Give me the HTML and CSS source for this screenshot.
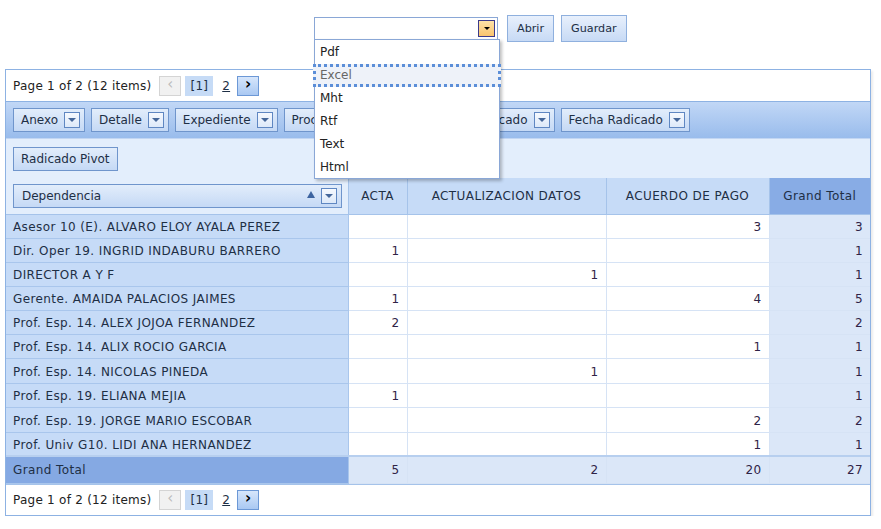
FILE: index.html
```html
<!DOCTYPE html>
<html>
<head>
<meta charset="utf-8">
<link rel="stylesheet" href="styles.css">
</head>
<body>
<div class="toolbar">
  <div class="combo">
    <div class="combo-input"></div>
    <div class="combo-btn"><span class="tri-black"></span></div>
    <ul class="combo-list">
      <li>Pdf</li>
      <li class="focused">Excel</li>
      <li>Mht</li>
      <li>Rtf</li>
      <li>Text</li>
      <li class="last">Html</li>
    </ul>
  </div>
  <button class="btn">Abrir</button>
  <button class="btn">Guardar</button>
</div>

<div class="pivot">
  <div class="pager">
    <span class="pager-text">Page 1 of 2 (12 items)</span>
    <span class="pbtn disabled">&lsaquo;</span>
    <span class="pcur">[1]</span>
    <span class="plink">2</span>
    <span class="pbtn next">&rsaquo;</span>
  </div>
  <div class="filter-area">
    <span class="field">Anexo<span class="dd"><span class="tri"></span></span></span>
    <span class="field">Detalle<span class="dd"><span class="tri"></span></span></span>
    <span class="field">Expediente<span class="dd"><span class="tri"></span></span></span>
    <span class="field w-proc">Proceso<span class="dd"><span class="tri"></span></span></span>
    <span class="field w-usr">Usuario Radicado<span class="dd"><span class="tri"></span></span></span>
    <span class="field">Fecha Radicado<span class="dd"><span class="tri"></span></span></span>
  </div>
  <div class="column-area">
    <span class="field plain">Radicado Pivot</span>
  </div>
  <table class="grid">
    <colgroup>
      <col class="c0"><col class="c1"><col class="c2"><col class="c3"><col class="c4">
    </colgroup>
    <thead>
      <tr>
        <th class="rowfield-cell"><span class="field wide"><span class="ftext">Dependencia</span><span class="sort"></span><span class="dd"><span class="tri"></span></span></span></th>
        <th>ACTA</th>
        <th>ACTUALIZACION DATOS</th>
        <th>ACUERDO DE PAGO</th>
        <th class="gt-head">Grand Total</th>
      </tr>
    </thead>
    <tbody>
      <tr><td class="rh">Asesor 10 (E). ALVARO ELOY AYALA PEREZ</td><td></td><td></td><td>3</td><td class="gt">3</td></tr>
      <tr><td class="rh">Dir. Oper 19. INGRID INDABURU BARRERO</td><td>1</td><td></td><td></td><td class="gt">1</td></tr>
      <tr><td class="rh">DIRECTOR A Y F</td><td></td><td>1</td><td></td><td class="gt">1</td></tr>
      <tr><td class="rh">Gerente. AMAIDA PALACIOS JAIMES</td><td>1</td><td></td><td>4</td><td class="gt">5</td></tr>
      <tr><td class="rh">Prof. Esp. 14. ALEX JOJOA FERNANDEZ</td><td>2</td><td></td><td></td><td class="gt">2</td></tr>
      <tr><td class="rh">Prof. Esp. 14. ALIX ROCIO GARCIA</td><td></td><td></td><td>1</td><td class="gt">1</td></tr>
      <tr class="tall"><td class="rh">Prof. Esp. 14. NICOLAS PINEDA</td><td></td><td>1</td><td></td><td class="gt">1</td></tr>
      <tr><td class="rh">Prof. Esp. 19. ELIANA MEJIA</td><td>1</td><td></td><td></td><td class="gt">1</td></tr>
      <tr class="tall"><td class="rh">Prof. Esp. 19. JORGE MARIO ESCOBAR</td><td></td><td></td><td>2</td><td class="gt">2</td></tr>
      <tr><td class="rh">Prof. Univ G10. LIDI ANA HERNANDEZ</td><td></td><td></td><td>1</td><td class="gt">1</td></tr>
      <tr class="total"><td class="rh">Grand Total</td><td>5</td><td>2</td><td>20</td><td class="gt">27</td></tr>
    </tbody>
  </table>
  <div class="pager bottom">
    <span class="pager-text">Page 1 of 2 (12 items)</span>
    <span class="pbtn disabled">&lsaquo;</span>
    <span class="pcur">[1]</span>
    <span class="plink">2</span>
    <span class="pbtn next">&rsaquo;</span>
  </div>
</div>
</body>
</html>
```
FILE: styles.css
```css
body {
  margin: 0;
  background: #fff;
  font-family: "DejaVu Sans", Verdana, sans-serif;
  font-size: 11px;
  color: #1e2f45;
}
.toolbar {
  display: flex;
  align-items: center;
  gap: 7px;
  padding: 15px 0 0 314px;
  height: 27px;
}
.combo {
  position: relative;
  width: 184px;
  height: 23px;
  box-sizing: border-box;
  border: 1px solid #8aa7d6;
  background: #fff;
  margin-right: 2px;
}
.combo-btn {
  position: absolute;
  right: 2px;
  top: 2px;
  width: 15px;
  height: 15px;
  border: 1px solid #3b3a8c;
  background: linear-gradient(#fde2a8, #f9c46e);
  display: flex;
  align-items: center;
  justify-content: center;
}
.tri-black {
  width: 0; height: 0;
  border-left: 3px solid transparent;
  border-right: 3px solid transparent;
  border-top: 3px solid #000;
}
.combo-list {
  position: absolute;
  left: -1px;
  top: 21px;
  width: 184px;
  margin: 0;
  padding: 1px 0 0;
  list-style: none;
  background: #fff;
  border: 1px solid #8aa7d6;
  box-shadow: 2px 2px 3px rgba(0,0,0,0.25);
  z-index: 10;
}
.combo-list li {
  height: 23px;
  line-height: 23px;
  padding-left: 5px;
  font-size: 12px;
  color: #222;
}
.combo-list li.last {
  height: 22px;
}
.combo-list li.focused {
  color: #666;
  background: #eef2f9;
  border: 3px dotted #5b8ed8;
  margin: 0 -2px;
  height: 17px;
  line-height: 17px;
  padding-left: 4px;
}
.btn {
  height: 27px;
  padding: 0 9px;
  font-family: "DejaVu Sans", Verdana, sans-serif;
  font-size: 11.2px;
  color: #1e2f45;
  border: 1px solid #8fb0de;
  background: linear-gradient(#e8f0fc, #c7daf5);
}
.pivot {
  margin: 27px 0 0 5px;
  width: 866px;
  box-sizing: border-box;
  border: 1px solid #8db2e3;
  box-shadow: 2px 2px 2px rgba(0,0,0,0.08);
}
.pager {
  height: 31px;
  display: flex;
  align-items: center;
  padding-left: 7px;
  background: #fff;
  font-size: 12px;
  letter-spacing: 0.25px;
  color: #222;
}
.pager.bottom {
  height: 30px;
  border-top: 1px solid #a5c3ea;
}
.pager-text { margin-right: 8px; }
.pbtn {
  width: 22px;
  height: 20px;
  box-sizing: border-box;
  display: inline-flex;
  align-items: center;
  justify-content: center;
  font-size: 15px;
  font-weight: bold;
  line-height: 1;
  padding-bottom: 2px;
}
.pbtn.disabled {
  border: 1px solid #d4d4d4;
  background: #f1f1f1;
  color: #bbb;
  font-weight: normal;
}
.pbtn.next {
  border: 1px solid #6c98d6;
  background: linear-gradient(#d6e6fb, #a9c8f2);
  color: #000;
}
.pcur {
  margin-left: 4px;
  padding: 3px 5px;
  background: #c6dbf6;
  color: #1e2f45;
}
.plink {
  margin: 0 7px 0 9px;
  text-decoration: underline;
  color: #1e2f45;
}
.filter-area {
  height: 38px;
  box-sizing: border-box;
  border-top: 1px solid #8db2e3;
  border-bottom: 1px solid #c2d6f3;
  background: linear-gradient(#c1d7f6, #99bcec);
  display: flex;
  align-items: center;
  gap: 6px;
  padding-left: 7px;
}
.field {
  height: 24px;
  box-sizing: border-box;
  border: 1px solid #6f95cc;
  background: linear-gradient(#e2edfb, #c5d9f5);
  display: inline-flex;
  align-items: center;
  padding: 0 4px 0 7px;
  font-size: 12px;
  color: #1e2f45;
  white-space: nowrap;
}
.field .dd {
  width: 16px;
  height: 16px;
  box-sizing: border-box;
  border: 1px solid #5f87c2;
  background: linear-gradient(#f6f9fe, #dde9f9);
  margin-left: 6px;
  display: inline-flex;
  align-items: center;
  justify-content: center;
}
.tri {
  width: 0; height: 0;
  border-left: 4px solid transparent;
  border-right: 4px solid transparent;
  border-top: 4px solid #45679a;
}
.w-proc { width: 90px; }
.w-usr { width: 175px; justify-content: flex-end; }
.field.plain { padding: 0 7px; }
.column-area {
  height: 39px;
  background: #e3eefc;
  display: flex;
  align-items: center;
  padding-left: 7px;
}
.grid {
  width: 100%;
  border-collapse: collapse;
  table-layout: fixed;
  font-size: 12px;
  letter-spacing: 0.4px;
}
col.c0 { width: 342px; }
col.c1 { width: 59px; }
col.c2 { width: 199px; }
col.c3 { width: 163px; }
col.c4 { width: 101px; }
.grid th {
  height: 36px;
  box-sizing: border-box;
  background: #c6dbf7;
  border: 1px solid #a5c3ea;
  border-top: none;
  font-weight: normal;
  color: #1e2f45;
  text-align: center;
}
.grid th.rowfield-cell {
  background: #e3eefc;
  border-left: none;
  padding: 0 6px 0 7px;
  text-align: left;
}
.grid th.gt-head {
  background: #88ace5;
  border-right: none;
}
.field.wide {
  width: 100%;
  display: flex;
  padding-left: 8px;
  letter-spacing: 0;
}
.ftext { flex: 1; text-align: left; }
.sort {
  width: 0; height: 0;
  border-left: 4px solid transparent;
  border-right: 4px solid transparent;
  border-bottom: 7px solid #3d64a0;
  margin-bottom: 2px;
}
.grid td {
  height: 24px;
  box-sizing: border-box;
  border: 1px solid #d6e3f5;
  border-left-color: #c4d7f1;
  text-align: right;
  padding: 2px 7px 0;
  color: #2f2346;
  background: #fff;
}
.grid tr.tall td {
  height: 25px;
}
.grid td.rh {
  background: #c6dbf7;
  border: 1px solid #a9c6ec;
  border-left: none;
  text-align: left;
  color: #1e2f45;
}
.grid td.gt {
  background: #dbe7f8;
  border-right: none;
}
.grid tr.total td {
  height: 27px;
  padding-top: 1px;
  background: #dbe7f8;
  border-top: 2px solid #b7cfef;
}
.grid tr.total td.rh {
  background: #85a9e3;
}
```
